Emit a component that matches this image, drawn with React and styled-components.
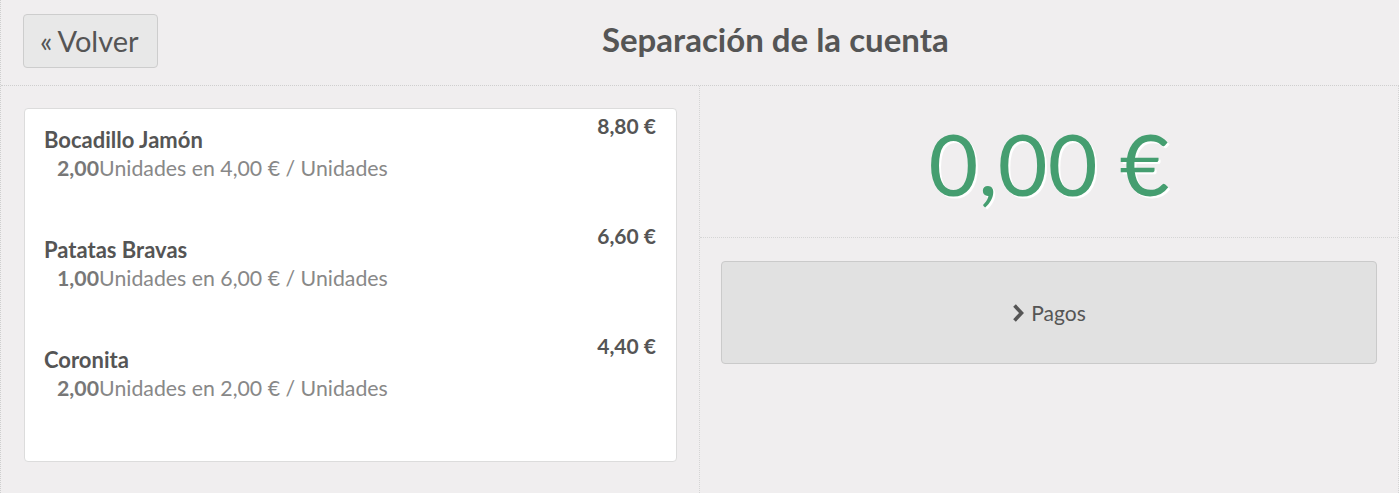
import React from 'react';
import styled, { createGlobalStyle } from 'styled-components';

const GlobalStyle = createGlobalStyle`
  html, body {
    margin: 0;
    padding: 0;
    background: #f0eeef;
    font-family: Lato, "Liberation Sans", sans-serif;
    color: #555;
  }
  * { box-sizing: border-box; }
`;

const items = [
  { name: 'Bocadillo Jamón', qty: '2,00', unit: '4,00 €', total: '8,80 €' },
  { name: 'Patatas Bravas', qty: '1,00', unit: '6,00 €', total: '6,60 €' },
  { name: 'Coronita', qty: '2,00', unit: '2,00 €', total: '4,40 €' },
];

const ChevronRight = () => (
  <svg width="12" height="18" viewBox="0 0 12 18" aria-hidden="true">
    <path d="M2.5 1.5 L9.5 9 L2.5 16.5" fill="none" stroke="#555" strokeWidth="3.6" strokeLinejoin="miter" />
  </svg>
);

const App = () => {
  return (
    <>
      <GlobalStyle />
      <Page>
        <Header>
          <BackButton>
            <span>«</span>Volver
          </BackButton>
          <Title>Separación de la cuenta</Title>
        </Header>
        <Body>
          <LeftColumn>
            <Card>
              {items.map((item) => (
                <Item key={item.name}>
                  <ItemInfo>
                    <ItemName>{item.name}</ItemName>
                    <ItemDetail>
                      <b>{item.qty}</b>Unidades en {item.unit} / Unidades
                    </ItemDetail>
                  </ItemInfo>
                  <ItemPrice>{item.total}</ItemPrice>
                </Item>
              ))}
            </Card>
          </LeftColumn>
          <RightColumn>
            <AmountBox>
              <Amount>0,00 €</Amount>
            </AmountBox>
            <Actions>
              <PayButton>
                <ChevronRight />
                Pagos
              </PayButton>
            </Actions>
          </RightColumn>
        </Body>
      </Page>
    </>
  );
};

const Page = styled.div`
  width: 1399px;
  height: 493px;
  border-left: 1px dotted #cfcfcf;
  display: flex;
  flex-direction: column;
  overflow: hidden;
`;

const Header = styled.div`
  display: flex;
  align-items: center;
  height: 86px;
  padding: 0 22px;
  border-bottom: 1px dotted #cfcfcf;
`;

const BackButton = styled.button`
  height: 54px;
  padding: 0 18px 0 16px;
  margin-top: -4px;
  background: #e8e8e8;
  border: 1px solid #cdcdcd;
  border-radius: 4px;
  font-family: Lato, "Liberation Sans", sans-serif;
  font-size: 29px;
  color: #555;
  display: flex;
  align-items: center;

  span {
    margin-right: 5px;
  }
`;

const Title = styled.h1`
  flex: 1;
  margin: -7px 0 0 16px;
  text-align: center;
  font-size: 33px;
  font-weight: 700;
  color: #555;
`;

const Body = styled.div`
  flex: 1;
  display: grid;
  grid-template-columns: 699px 1fr;
`;

const LeftColumn = styled.div`
  padding: 22px 22px 0 23px;
  border-right: 1px dotted #d5d5d5;
`;

const Card = styled.div`
  height: 354px;
  background: #fff;
  border: 1px solid #dcdcdc;
  border-radius: 4px;
  padding: 5px 20px 0 19px;
`;

const Item = styled.div`
  display: flex;
  justify-content: space-between;
  align-items: flex-start;
  height: 110px;
`;

const ItemInfo = styled.div`
  display: flex;
  flex-direction: column;
  padding-top: 12px;
`;

const ItemName = styled.div`
  font-size: 22px;
  font-weight: 700;
  line-height: 28px;
  color: #555;
`;

const ItemDetail = styled.div`
  font-size: 21.3px;
  line-height: 28px;
  padding-left: 13px;
  color: #888;

  b {
    color: #777;
    font-weight: 700;
  }
`;

const ItemPrice = styled.div`
  font-size: 21px;
  font-weight: 700;
  line-height: 24px;
  color: #555;
`;

const RightColumn = styled.div`
  display: flex;
  flex-direction: column;
  border-right: 1px dotted #d5d5d5;
`;

const AmountBox = styled.div`
  height: 152px;
  display: flex;
  align-items: center;
  justify-content: center;
  border-bottom: 1px dotted #d5d5d5;
`;

const Amount = styled.div`
  font-family: Lato, "Liberation Sans", sans-serif;
  font-size: 86px;
  line-height: 1;
  color: #459e70;
  text-shadow: 2px 2px 0 #fff;
  margin-top: 2px;
`;

const Actions = styled.div`
  padding: 23px 21px 0 21px;
`;

const PayButton = styled.button`
  width: 100%;
  height: 103px;
  background: #e1e1e1;
  border: 1px solid #cacaca;
  border-radius: 4px;
  display: flex;
  align-items: center;
  justify-content: center;
  gap: 7px;
  font-family: Lato, "Liberation Sans", sans-serif;
  font-size: 21px;
  color: #555;
`;

export default App;
